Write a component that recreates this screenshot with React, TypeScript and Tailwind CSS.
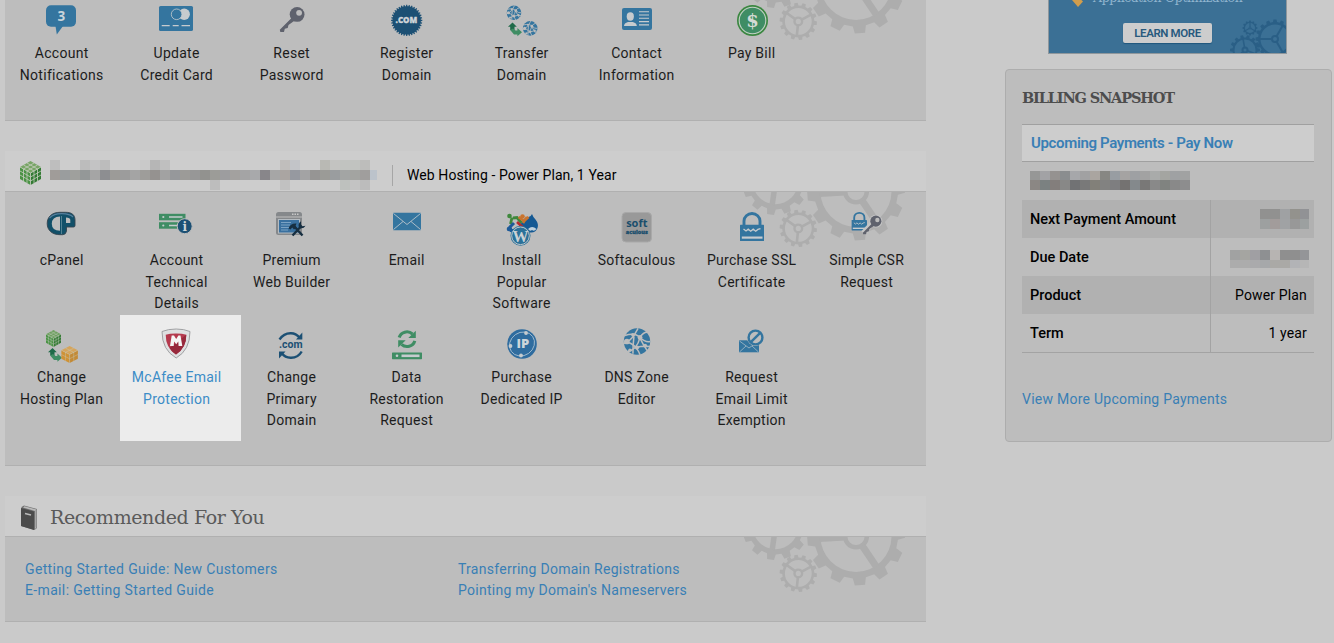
import React from "react";

const BLUE = "#34759f";
const NAVY = "#1c5074";
const GREEN = "#3f8d64";
const LIGHT = "#c6cbce";

function gearPath(cx: number, cy: number, teeth: number, rOut: number, rRim: number, rIn: number, phase: number) {
  const step = (Math.PI * 2) / teeth;
  const pt = (r: number, a: number) => `${(cx + r * Math.cos(a)).toFixed(2)} ${(cy + r * Math.sin(a)).toFixed(2)}`;
  let d = "";
  for (let i = 0; i < teeth; i++) {
    const a = phase + i * step;
    d += `${i ? "L" : "M"}${pt(rRim, a - step * 0.3)}L${pt(rOut, a - step * 0.2)}L${pt(rOut, a + step * 0.2)}L${pt(rRim, a + step * 0.3)}`;
  }
  d += `ZM${cx - rIn} ${cy}a${rIn} ${rIn} 0 1 0 ${rIn * 2} 0a${rIn} ${rIn} 0 1 0 ${-rIn * 2} 0Z`;
  return d;
}

function Gear(p: {
  cx: number; cy: number; teeth: number; out: number; rim: number; inner: number;
  hub: number; hubWidth: number; spokes: number[]; spokeWidth: number; phase: number; color: string;
}) {
  return (
    <g stroke={p.color} fill="none">
      <path d={gearPath(p.cx, p.cy, p.teeth, p.out, p.rim, p.inner, p.phase)} fill={p.color} fillRule="evenodd" stroke="none" />
      <circle cx={p.cx} cy={p.cy} r={p.hub} strokeWidth={p.hubWidth} />
      {p.spokes.map((deg) => {
        const a = (deg * Math.PI) / 180;
        return (
          <line
            key={deg}
            x1={p.cx + p.hub * Math.cos(a)}
            y1={p.cy + p.hub * Math.sin(a)}
            x2={p.cx + (p.inner + 1) * Math.cos(a)}
            y2={p.cy + (p.inner + 1) * Math.sin(a)}
            strokeWidth={p.spokeWidth}
          />
        );
      })}
    </g>
  );
}

function GearBackdrop({ className }: { className: string }) {
  return (
    <svg className={className} width="186" height="56" viewBox="740 0 186 56">
      <Gear cx={775.5} cy={-10.5} teeth={12} out={33.5} rim={28} inner={22.7} hub={7} hubWidth={4} spokes={[98, 218, 338]} spokeWidth={5.5} phase={1.72} color="#adadad" />
      <Gear cx={856} cy={-0.5} teeth={12} out={49} rim={42} inner={35.5} hub={10.8} hubWidth={4.5} spokes={[177, 56, 296]} spokeWidth={7} phase={1.49} color="#adadad" />
      <Gear cx={798.3} cy={36.4} teeth={14} out={18.7} rim={16} inner={13.4} hub={3.8} hubWidth={2.4} spokes={[96, 216, 332]} spokeWidth={2.6} phase={0.1} color="#adadad" />
    </svg>
  );
}

function Key({ color = "#5f626d" }: { color?: string }) {
  return (
    <g>
      <path d="M1 15 L-11.5 27.5 L-11 29.7 L-7.3 29.7 L-6.5 26.5 L-3.6 25.8 L-2.8 22.8 L4.5 17.6 Z" fill={color} />
      <circle cx="5.8" cy="12.2" r="7.4" fill={color} />
      <circle cx="7.8" cy="10.6" r="2.9" fill="#bdbdbd" />
    </g>
  );
}

function Globe({ cx, cy, r }: { cx: number; cy: number; r: number }) {
  const k = r / 13;
  return (
    <g transform={`translate(${cx} ${cy}) scale(${k})`}>
      <circle r="13" fill={BLUE} />
      <g fill="none" stroke="#bdbdbd" strokeWidth="1.5">
        <path d="M-12 -6 Q-2 -9 3 -4 T13 0" />
        <path d="M-13 2 Q-6 -1 -3 -6 T1 -13" />
        <path d="M-9 10 Q0 8 3 -4 Q6 -9 10 -9" />
        <path d="M-13 0 Q-5 1 -1 6 Q2 10 3 13" />
        <path d="M-3 -5 Q-4 3 -4 12" />
        <path d="M3 -3 Q6 3 10 9 M-1 6 Q6 4 13 5" />
      </g>
      <g fill="#bdbdbd">
        <circle cx="3" cy="-4" r="2.4" />
        <circle cx="-4" cy="-6.5" r="1.8" />
        <circle cx="-10" cy="0" r="2.8" />
        <circle cx="0" cy="6" r="2.1" />
        <circle cx="8" cy="4" r="1.9" />
        <circle cx="-7" cy="8.5" r="1.7" />
      </g>
    </g>
  );
}

function SwapArrows({ y }: { y: number }) {
  return (
    <g transform={`translate(0 ${y})`}>
      <path d="M-8.5 0 L-13 4.2 L-10.8 4.2 L-10.8 7.5 L-6.5 8.5 L-6.5 4.2 L-4.2 4.2 Z" fill="#1f6a49" />
      <path d="M-8 6 L-5.5 8 L-3.6 8 L-3.6 5.6 L1 9.8 L-3.6 13.8 L-3.6 12 L-7 12 L-10.8 7.5 Z" fill={GREEN} />
    </g>
  );
}

function Cube({ cx, top, w, h, color, shade, cap, cells, line = 0.6 }: {
  cx: number; top: number; w: number; h: number; color: string; shade: string; cap: string; cells: number; line?: number;
}) {
  const x0 = cx - w / 2;
  const x1 = cx + w / 2;
  const q = h / 4;
  const b = top + h;
  const hw = w / 2;
  const side = h - 2 * q;
  const lines: string[] = [];
  for (let i = 1; i < cells; i++) {
    const t = i / cells;
    if (cells > 2 || i === 1) lines.push(`M${x0} ${top + q + side * t}L${cx} ${top + 2 * q + side * t}L${x1} ${top + q + side * t}`);
    lines.push(`M${x1 - hw * t} ${top + q - q * t}L${cx - hw * t} ${top + 2 * q - q * t}V${b - q * t}`);
    lines.push(`M${x0 + hw * t} ${top + q - q * t}L${cx + hw * t} ${top + 2 * q - q * t}V${b - q * t}`);
  }
  return (
    <g>
      <path d={`M${x0} ${top + q}L${cx} ${top + 2 * q}V${b}L${x0} ${b - q}Z`} fill={color} />
      <path d={`M${x1} ${top + q}L${cx} ${top + 2 * q}V${b}L${x1} ${b - q}Z`} fill={shade} />
      <path d={`M${cx} ${top}L${x1} ${top + q}L${cx} ${top + 2 * q}L${x0} ${top + q}Z`} fill={cap} />
      <path d={`M${x0} ${top + q}L${cx} ${top + 2 * q}L${x1} ${top + q}M${cx} ${top + 2 * q}V${b}${lines.join("")}`} fill="none" stroke="#c6cdbf" strokeWidth={line} />
    </g>
  );
}

function Lock({ transform }: { transform?: string }) {
  return (
    <g transform={transform}>
      <path d="M-7.5 16V12a8 7.500 0 0 1 16 0v4" fill="none" stroke={BLUE} strokeWidth="2.9" />
      <rect x="-11.5" y="15.8" width="24" height="16.2" rx="0.6" fill={BLUE} />
      <path d="M-8 20l2.500 2 2.200-1.800 2.500 2 2.500-2 2.500 2 2.200-1.800 2.600-0.800" fill="none" stroke={LIGHT} strokeWidth="1.3" />
      <path d="M-9.700 28.600H11" stroke={LIGHT} strokeWidth="2.2" />
    </g>
  );
}

const icons: Record<string, React.ReactNode> = {
  bubble: (
    <g>
      <rect x="-15" y="3.2" width="30" height="21.6" rx="5" fill={BLUE} />
      <path d="M-5.5 24L-4.2 32.5L2 24Z" fill={BLUE} />
      <text x="0.3" y="18.8" textAnchor="middle" className="font-['Open_Sans'] text-[13.5px] font-bold" fill="#c8d3da">3</text>
    </g>
  ),
  card: (
    <g>
      <rect x="-17" y="4" width="34" height="25" rx="1.6" fill={BLUE} />
      <circle cx="8.2" cy="12.3" r="5.7" fill={LIGHT} />
      <circle cx="0.6" cy="12.3" r="5.3" fill={BLUE} stroke={LIGHT} strokeWidth="0.8" />
      <path d="M-14.3 23.6h8M-3.3 23.6h6M5.5 23.6h8.5" stroke={LIGHT} strokeWidth="1.2" />
    </g>
  ),
  key: <g transform="translate(0.3 0.2)"><Key /></g>,
  com: (
    <g>
      <path d={gearPath(0.7, 18.4, 36, 15.6, 14.2, 0.01, 0)} fill={NAVY} />
      <text x="0.4" y="21.2" textAnchor="middle" className="font-['Open_Sans'] text-[8px] font-extrabold" fill="#d0d5d8" stroke="#d0d5d8" strokeWidth="0.3">.COM</text>
    </g>
  ),
  transfer: (
    <g>
      <Globe cx={-7} cy={10.8} r={7.3} />
      <Globe cx={9.2} cy={26.4} r={7.3} />
      <SwapArrows y={20.5} />
    </g>
  ),
  contact: (
    <g>
      <rect x="-14" y="6" width="30" height="22" rx="2" fill={BLUE} />
      <ellipse cx="-5.7" cy="14.5" rx="3.6" ry="4.2" fill={LIGHT} />
      <path d="M-12 24q0-3 4-4h4.800q4 1 4 4Z" fill={LIGHT} />
      <path d="M3 9.700h10M3 13h10M3 16.300h10M3 19.600h10M3 22.900h10" stroke={LIGHT} strokeWidth="1.1" />
    </g>
  ),
  bill: (
    <g>
      <circle cx="1.500" cy="18.500" r="15.500" fill="#3b8741" />
      <circle cx="1.500" cy="18.500" r="13.300" fill={GREEN} stroke="#c4d2c6" strokeWidth="1.100" />
      <text x="1.500" y="25.200" textAnchor="middle" className="font-['DejaVu_Serif'] text-[18px] font-bold" fill="#d3dad5">$</text>
    </g>
  ),
  cpanel: (
    <g>
      <path d="M-1 3.300H4.500C11 3.300 14 6 14 11V16.500Q14 18 12.500 18H5.500V22Q5 25.700 1.500 25.700H-1C-8.500 25.700 -13.800 21.500 -13.800 14.500S-8.500 3.300 -1 3.300Z" fill="#125069" stroke="#37444f" strokeWidth="0.9" />
      <path d="M-1 7.500V21.800Q-9.200 21.500 -9.200 14.700T-1 7.500Z" fill="#bdbdbd" />
      <path d="M5 8.500Q9.300 8.500 9.300 11V14H5Z" fill="#bdbdbd" />
      <path d="M0.500 7v18" stroke="#7ea2ae" strokeWidth="0.600" />
      <path d="M-11.500 9Q-7 4.500 1 4.700T12 8" fill="none" stroke="#577f9d" strokeWidth="1.200" />
    </g>
  ),
  server: (
    <g>
      <rect x="-17" y="4.800" width="26.500" height="6.500" fill={GREEN} />
      <rect x="-17" y="13.200" width="22" height="6.500" fill={GREEN} />
      <circle cx="-12.700" cy="8" r="1.100" fill={LIGHT} />
      <circle cx="-12.700" cy="16.500" r="1.100" fill={LIGHT} />
      <path d="M-7 8h13.500M-7 16.500h10" stroke={LIGHT} strokeWidth="1.400" />
      <circle cx="8.700" cy="17.200" r="7.500" fill={NAVY} stroke="#bdbdbd" strokeWidth="1" />
      <text x="8.700" y="21.500" textAnchor="middle" className="font-['DejaVu_Serif'] text-[12px] font-bold" fill="#d0d5d8">i</text>
    </g>
  ),
  builder: (
    <g>
      <rect x="-15" y="3" width="26" height="23" rx="2.500" fill="#85888b" />
      <path d="M-15 8h26" stroke="#b7b7b7" strokeWidth="1.200" />
      <path d="M1 5.200h7" stroke="#c8c8c8" strokeWidth="1.400" strokeDasharray="1.500 1" />
      <rect x="-12.500" y="10.500" width="21" height="13.500" fill="#39709f" stroke="#b4bbc1" strokeWidth="1" />
      <path d="M-10 13.500h10M-10 16h9M-10 18.500h8M-10 21h7" stroke="#82a8c7" strokeWidth="0.900" />
      <path d="M3 17l8.500 9.500M9.500 18L1.500 26.500" stroke="#172f41" strokeWidth="2.400" />
      <path d="M-2.500 19.500Q-0.500 14 5.500 14.500L4.500 17L5.500 18.500L3 20.500L1.200 18.500L-0.500 20.500Z" fill="#172f41" />
      <path d="M10 12.200Q6.500 14.500 8 18.500Q12 20.800 14.500 16.800L11.500 17.300L10 15.500Z" fill="#172f41" />
    </g>
  ),
  email: (
    <g>
      <rect x="-13" y="3.700" width="28" height="17.500" rx="0.600" fill={BLUE} />
      <path d="M-12.500 4.500L1 15.500L14.500 4.500M-12.500 20.500L-3 12.500M14.500 20.500L5 12.500" fill="none" stroke="#b8c4cc" strokeWidth="0.9" />
    </g>
  ),
  install: (
    <g>
      <path d="M2 12Q3 8.500 7.500 8Q10 7.500 11 5Q12 8 14.500 10.500Q18 15 16.500 19Q14 25 7 23L-2 17Z" fill="#155993" />
      <path d="M7 20q4-4 8.500 0-2.500 3-4.500 1-2 2-4-1Z" fill="#bfd0dc" />
      <path d="M-8 9L-4 8.500L0.500 14M-9 8.500L-10.500 15" fill="none" stroke="#3e883c" strokeWidth="2.800" />
      <path d="M-2.500 8L3 12L7.500 8M6 8L2 14" fill="none" stroke="#c9732d" strokeWidth="2.600" />
      <path d="M-4 13l6 5.500" stroke="#b72b2e" strokeWidth="2.600" />
      <path d="M-7 14L-11 18L-10 21.500H-7" fill="none" stroke="#1d5a99" strokeWidth="3" />
      <circle cx="-11.500" cy="7" r="2.300" fill="#3e883c" />
      <circle cx="1.500" cy="7.500" r="2.300" fill="#c9732d" />
      <circle cx="-12" cy="20" r="2.300" fill="#1d5a99" />
      <circle cx="-0.500" cy="26.800" r="10" fill="#2b7199" />
      <circle cx="-0.500" cy="26.800" r="8.800" fill="none" stroke="#c0c7cb" strokeWidth="1" />
      <text x="-0.500" y="32.500" textAnchor="middle" className="font-['Liberation_Serif'] text-[16px] font-bold" fill="#cad1d5">W</text>
    </g>
  ),
  soft: (
    <g>
      <rect x="-14" y="3.500" width="29.500" height="29.500" rx="4" fill="#999" stroke="#a9a9a9" />
      <text x="0.800" y="17.500" textAnchor="middle" className="font-['Open_Sans'] text-[11px] font-bold" fill="#1a4e6c">soft</text>
      <text x="0.800" y="25" textAnchor="middle" textLength="22" className="font-['Open_Sans'] text-[5.5px] font-extrabold" fill="#1a4e6c" stroke="#1a4e6c" strokeWidth="0.300">aculous</text>
    </g>
  ),
  ssl: <Lock transform="translate(0.500 0)" />,
  csr: (
    <g>
      <Lock transform="translate(-7 1) scale(0.640)" />
      <g transform="translate(5.500 3) scale(0.750)">
        <path d="M1 15L-11 28" stroke="#c6c6c6" strokeWidth="7" />
        <circle cx="5.800" cy="12.200" r="8.600" fill="#c6c6c6" />
        <Key />
      </g>
    </g>
  ),
  plan: (
    <g>
      <Cube cx={-7.500} top={4} w={15} h={17} color="#4a9244" shade="#357a35" cap="#6fa061" cells={3} line={0.4} />
      <SwapArrows y={22} />
      <Cube cx={8.600} top={20} w={16.500} h={17} color="#cf9235" shade="#c38a36" cap="#d5a45b" cells={2} line={0.4} />
    </g>
  ),
  mcafee: (
    <g>
      <path d="M0.200 3Q8 3 14 5.500Q14 24 0.200 32Q-14 24 -14 5.500Q-8 3 0.200 3Z" fill="#dfe0e1" stroke="#97999b" strokeWidth="0.9" />
      <path d="M0 7.500Q6.500 7.500 10.300 8.700Q10.500 21.500 0 28.500Q-10.500 21.500 -10.300 8.700Q-6.500 7.500 0 7.500Z" fill="#b53a4e" />
      <path d="M10.300 8.700Q10.500 21.500 0 28.500Q-4 26 -6.500 22Z" fill="#97293c" />
      <path d="M-6 20L-4.300 9.500H-2L0.200 13L2.400 9.500H4.500L6.300 20H2.600L2.300 15.500L0.200 18.300L-1.900 15.500L-2.300 20Z" fill="#f5f5f5" />
    </g>
  ),
  change: (
    <g>
      <path d="M-11.500 13.500Q-7 7 0 7.300Q5 7.500 8.500 11.500" fill="none" stroke={NAVY} strokeWidth="2.400" />
      <path d="M5 13.500H11.300V6.500Z" fill={NAVY} />
      <path d="M10.700 25.500Q7 32 -0.500 31.700Q-6 31.500 -9 27.500" fill="none" stroke={NAVY} strokeWidth="2.400" />
      <path d="M-5.500 25.500H-12V32.500Z" fill={NAVY} />
      <text x="-0.300" y="22.300" textAnchor="middle" className="font-['Roboto'] text-[10.5px] font-bold" fill={NAVY}>.com</text>
    </g>
  ),
  restore: (
    <g fill="none" stroke={GREEN} strokeWidth="3.100">
      <path d="M-6.800 11.500A8 7.600 0 0 1 6.500 8" />
      <path d="M2.300 12H9.800V4.700Z" fill={GREEN} stroke="none" />
      <path d="M8.800 14.800A8 7.600 0 0 1 -4.500 18.300" />
      <path d="M-0.300 14.300H-7.800V21.600Z" fill={GREEN} stroke="none" />
      <rect x="-14" y="26.500" width="30" height="6.700" rx="0.600" fill={GREEN} stroke="none" />
      <circle cx="-9" cy="29.800" r="1.300" fill={LIGHT} stroke="none" />
      <path d="M-4.500 29.800h18" stroke={LIGHT} strokeWidth="2.600" />
    </g>
  ),
  ip: (
    <g>
      <circle cx="1" cy="18" r="14.800" fill="#2f6c9f" />
      <ellipse cx="1" cy="18" rx="13" ry="11.500" fill="none" stroke="#9fb9cd" strokeWidth="0.900" transform="rotate(-35 1 18)" />
      <circle cx="5" cy="7" r="1.900" fill={LIGHT} />
      <circle cx="-10.500" cy="20" r="1.900" fill={LIGHT} />
      <circle cx="0" cy="29.500" r="1.900" fill={LIGHT} />
      <text x="1.800" y="22.300" textAnchor="middle" className="font-['Open_Sans'] text-[13px] font-extrabold" fill="#cdd5da">IP</text>
    </g>
  ),
  dns: <Globe cx={1} cy={15.500} r={13.200} />,
  limit: (
    <g>
      <rect x="-12" y="14.300" width="20" height="12" fill={BLUE} />
      <path d="M-11.500 15L-2 22L7.500 15M-11.500 26L-5 20M7.500 26L1 20" fill="none" stroke="#b8c4cc" strokeWidth="0.700" />
      <circle cx="4.500" cy="11.500" r="8.500" fill="#bdbdbd" />
      <circle cx="4.500" cy="11.500" r="6.900" fill="none" stroke={BLUE} strokeWidth="2.400" />
      <path d="M-0.200 16.200L9.200 6.800" stroke={BLUE} strokeWidth="2.400" />
    </g>
  ),
};

type Item = { icon: string; lines: string[]; active?: boolean };

const accountItems: Item[] = [
  { icon: "bubble", lines: ["Account", "Notifications"] },
  { icon: "card", lines: ["Update", "Credit Card"] },
  { icon: "key", lines: ["Reset", "Password"] },
  { icon: "com", lines: ["Register", "Domain"] },
  { icon: "transfer", lines: ["Transfer", "Domain"] },
  { icon: "contact", lines: ["Contact", "Information"] },
  { icon: "bill", lines: ["Pay Bill"] },
];

const hostingItems: Item[] = [
  { icon: "cpanel", lines: ["cPanel"] },
  { icon: "server", lines: ["Account", "Technical", "Details"] },
  { icon: "builder", lines: ["Premium", "Web Builder"] },
  { icon: "email", lines: ["Email"] },
  { icon: "install", lines: ["Install", "Popular", "Software"] },
  { icon: "soft", lines: ["Softaculous"] },
  { icon: "ssl", lines: ["Purchase SSL", "Certificate"] },
  { icon: "csr", lines: ["Simple CSR", "Request"] },
  { icon: "plan", lines: ["Change", "Hosting Plan"] },
  { icon: "mcafee", lines: ["McAfee Email", "Protection"], active: true },
  { icon: "change", lines: ["Change", "Primary", "Domain"] },
  { icon: "restore", lines: ["Data", "Restoration", "Request"] },
  { icon: "ip", lines: ["Purchase", "Dedicated IP"] },
  { icon: "dns", lines: ["DNS Zone", "Editor"] },
  { icon: "limit", lines: ["Request", "Email Limit", "Exemption"] },
];

function IconGrid({ items }: { items: Item[] }) {
  return (
    <div className="-ml-[1.5px] grid w-[920px] auto-rows-[117px] grid-cols-8">
      {items.map((item) => (
        <a key={item.icon} className="relative flex flex-col items-center text-center">
          {item.active && <span className="absolute -top-[11px] left-[1.5px] h-[126px] w-[121px] bg-[#ececec]" />}
          <svg className="relative h-[41px] w-[60px] shrink-0 overflow-visible" viewBox="-30 0 60 41">{icons[item.icon]}</svg>
          <span className={`relative pl-[1.3px] text-[14px] leading-[21.6px] tracking-[0.27px] ${item.active ? "text-[#3c8cc7]" : "text-[#1c1c1c]"}`}>
            {item.lines.map((line) => (
              <span key={line} className="block whitespace-nowrap">{line}</span>
            ))}
          </span>
        </a>
      ))}
    </div>
  );
}

type Block = [number, number, number, number, string];

function Mosaic({ blocks, width, height, className }: { blocks: Block[]; width: number; height: number; className?: string }) {
  return (
    <svg className={className} width={width} height={height} shapeRendering="crispEdges">
      {blocks.map(([x, y, w, h, fill]) => (
        <rect key={`${x}-${y}`} x={x} y={y} width={w} height={h} fill={fill} />
      ))}
    </svg>
  );
}

const row = (colors: string, y: number, h: number): Block[] =>
  colors.split(" ").map((c, i) => [i * 10, y, 10, h, `#${c}`] as Block);

const domainBlocks: Block[] = [
  ...row("a09c99 9a9d9e 9fa09d 949898 a5a5a5 8d8e91 9c9b98 9c9c9c a4a4a4 9e9d9a 959290 a2a2a2 96989b 9c9b98 979797 92928f 9c9c98 9d9d9f a3a19f a4a4a5 a8a9ab 88868a a6a6a6 aaa5a2 9699a0 a3a3a4 969594 9b9b97 9a9d9f a3a5a4 a3a4a1 a09e9d", 10, 10),
  [320, 10, 7, 10, "#bcc3cb"],
  [0, 0, 10, 10, "#bebebe"], [30, 0, 10, 10, "#bcbcbc"], [40, 0, 10, 10, "#c3c3c4"], [50, 0, 10, 10, "#bcbcbc"],
  [90, 0, 10, 10, "#c9c9c9"], [100, 0, 10, 10, "#b6b6b6"], [110, 0, 10, 10, "#bfbfbf"],
  [230, 0, 10, 10, "#c0bebc"], [240, 0, 10, 10, "#c2c4c8"], [270, 0, 10, 10, "#b9b9b4"], [280, 0, 10, 10, "#c3c3c1"],
  [290, 0, 20, 10, "#c1c3c0"], [310, 0, 10, 10, "#bdbdbb"],
  [160, 20, 10, 10, "#bdbdbd"], [230, 20, 10, 10, "#c1c1c1"], [290, 20, 10, 10, "#bec1be"], [300, 20, 10, 10, "#c3c3c3"], [310, 20, 10, 10, "#bcbcbc"],
];

const payerBlocks: Block[] = [
  ...row("969796 a2a2a5 959290 8a8d8f a6a7aa a1a1a2 aaa5a0 878783 989da2 a5a3a2 9ea0a3 a2a2a2 a9abaa a4a5a1 9fa1a3 a1a2a2", 0, 9),
  ...row("8b8784 7b8181 837e7c 888887 717274 797979 828079 828281 7e7e80 747271 84898c 797877 898989 808380 898989 8d8d8e", 9, 10),
];

const amountBlocks: Block[] = [
  [0, 0, 20, 10, "#919190"], [20, 0, 10, 10, "#9fa1a3"], [30, 0, 10, 10, "#93928d"], [40, 0, 9, 10, "#919295"],
  [0, 10, 10, 10, "#9da0a0"], [10, 10, 10, 10, "#a29c9b"], [20, 10, 10, 10, "#a0a2a4"], [30, 10, 10, 10, "#989898"], [40, 10, 9, 10, "#9ca0a0"],
];

const dueBlocks: Block[] = [
  [0, 0, 10, 10, "#a1a2a2"], [10, 0, 10, 10, "#a5a5a1"], [20, 0, 10, 10, "#a09fa3"], [30, 0, 10, 10, "#8e9092"], [40, 0, 10, 10, "#b7b4b2"], [50, 0, 20, 10, "#8f8f8f"], [70, 0, 9, 10, "#949598"],
  [0, 10, 20, 8, "#acacac"], [20, 10, 10, 8, "#aaaaac"], [30, 10, 10, 8, "#a6a8aa"], [40, 10, 20, 8, "#aaa9a6"], [60, 10, 10, 8, "#b2b3b6"], [70, 10, 9, 8, "#b6b6b6"],
];

function BookIcon() {
  return (
    <svg className="ml-4 mt-1 h-[26px] w-[18px]" viewBox="0 0 18 26">
      <path d="M0.500 2L3 0.500L16 4V23L13.500 25L0 21Z" fill="#707070" />
      <path d="M2 2.500L3.500 1.300L15.500 4.500V22.500L14 24V6Z" fill="#bababa" />
      <path d="M0 3L13 6.500V25L0 21Z" fill="#4b4b4b" />
      <path d="M4 8.500L10 10" stroke="#bbb" strokeWidth="1.300" />
      <path d="M15 5V22.500" stroke="#808080" strokeWidth="0.700" />
    </svg>
  );
}

function PromoBanner() {
  return (
    <div className="relative ml-[43px] h-[54px] w-[239px] overflow-hidden border border-t-0 border-[#8f979c] bg-[#3b7095]">
      <svg className="absolute left-[23px] top-0 h-[7px] w-3" viewBox="0 0 12 7">
        <path d="M0 0L6 7L11 1.500L9.500 0Z" fill="#d19d4c" />
      </svg>
      <div className="absolute -top-[10px] left-[44px] whitespace-nowrap font-['DejaVu_Serif',serif] text-[12.5px] leading-4 tracking-[-0.35px] text-[#91b5cf]">Application Optimization</div>
      <div className="mx-auto mt-[23px] flex h-5 w-[89px] items-center justify-center rounded-[2px] bg-[#cdcdcd] font-['Roboto',sans-serif] text-[11.5px] font-semibold leading-5 tracking-[-0.4px] text-[#285a7d] shadow-[0_1px_1px_#21577d]">LEARN MORE</div>
      <svg className="absolute bottom-0 right-0" width="56" height="34" viewBox="0 0 56 34">
        <Gear cx={45} cy={20} teeth={16} out={19.500} rim={17} inner={14.500} hub={3} hubWidth={2} spokes={[60, 180, 300]} spokeWidth={2} phase={0} color="#2a5f86" />
        <Gear cx={20} cy={9} teeth={12} out={7.500} rim={6.300} inner={5} hub={1} hubWidth={1} spokes={[30, 150, 270]} spokeWidth={1.200} phase={0} color="#2a5f86" />
        <Gear cx={15} cy={31} teeth={14} out={15} rim={12.500} inner={10.500} hub={2.500} hubWidth={2} spokes={[20, 140, 260]} spokeWidth={1.600} phase={0} color="#2a5f86" />
      </svg>
    </div>
  );
}

export default function App() {
  const label = "flex-1 pl-2 pt-[1px] text-[14.5px] font-medium text-black";
  const value = "flex h-full w-[104px] items-center justify-end border-l border-[#a3a3a3] text-[14px] tracking-[0.15px] text-black";
  return (
    <div className="flex h-[643px] w-[1334px] overflow-hidden bg-[#cacaca] font-['Roboto','Liberation_Sans',sans-serif]">
      <main className="ml-[5px] w-[921px] shrink-0">
        <section className="relative h-[121px] overflow-hidden border-b border-[#b0b0b0] bg-[#bdbdbd] pt-[2px]">
          <GearBackdrop className="absolute -top-[15.500px] right-0" />
          <IconGrid items={accountItems} />
        </section>

        <section className="mt-[30px]">
          <header className="flex h-[41px] items-center border-b border-[#b0b0b0] bg-[#cdcdcd]">
            <svg className="ml-[15px] mt-1 h-6 w-[22px]" viewBox="0 0 22 24">
              <Cube cx={10.500} top={0} w={21} h={24} color="#4a9244" shade="#327a33" cap="#78a566" cells={3} line={0.8} />
            </svg>
            <Mosaic className="ml-2 mt-2" blocks={domainBlocks} width={327} height={30} />
            <div className="ml-[15px] mt-2 h-[21px] border-l border-[#a6a6a6]" />
            <div className="ml-[14px] mt-[9px] text-[14px] tracking-[0.1px] text-black">Web Hosting - Power Plan, 1 Year</div>
          </header>
          <div className="relative h-[274px] border-b border-[#b0b0b0] bg-[#bdbdbd] pt-[17px]">
            <GearBackdrop className="absolute right-0 top-0" />
            <IconGrid items={hostingItems} />
          </div>
        </section>

        <section className="mt-[30px]">
          <header className="flex h-[41px] items-center border-b border-[#b0b0b0] bg-[#cdcdcd]">
            <BookIcon />
            <h2 className="ml-[11px] mt-[3px] font-['DejaVu_Serif',serif] text-[19px] tracking-[-0.4px] text-[#5a5a5a]">Recommended For You</h2>
          </header>
          <div className="relative h-[85px] border-b border-[#b0b0b0] bg-[#bdbdbd] pl-5 pt-[22px]">
            <GearBackdrop className="absolute right-0 top-0" />
            <div className="relative flex text-[14px] leading-[21px] text-[#397fb5]">
              <div className="w-[433px] tracking-[0.35px]">
                <a className="block">Getting Started Guide: New Customers</a>
                <a className="block">E-mail: Getting Started Guide</a>
              </div>
              <div className="tracking-[0.27px]">
                <a className="block">Transferring Domain Registrations</a>
                <a className="block">Pointing my Domain's Nameservers</a>
              </div>
            </div>
          </div>
        </section>
      </main>

      <aside className="ml-[79px] w-[327px] shrink-0">
        <PromoBanner />
        <section className="mt-[15px] h-[373px] rounded border border-[#adadad] bg-[#bdbdbd] px-4 pt-[15px]">
          <h3 className="h-[39px] font-['DejaVu_Serif',serif] text-[14.5px] font-bold leading-[26px] tracking-[-1.15px] text-[#4d4d4d]">BILLING SNAPSHOT</h3>
          <div className="flex h-[38px] w-[292px] items-center border-y border-[#a0a0a0] bg-[#cdcdcd] pl-[9px] text-[15px] font-semibold tracking-[-0.35px] text-[#397fb5]">Upcoming Payments - Pay Now</div>
          <div className="h-[38px] pl-2 pt-[9px]">
            <Mosaic blocks={payerBlocks} width={160} height={19} />
          </div>
          <div className="w-[292px] border-b border-[#a3a3a3]">
            <div className="flex h-[38px] items-center bg-[#b1b1b1]">
              <div className={label}>Next Payment Amount</div>
              <div className={`${value} pr-[5px]`}><Mosaic blocks={amountBlocks} width={49} height={20} /></div>
            </div>
            <div className="flex h-[38px] items-center">
              <div className={label}>Due Date</div>
              <div className={`${value} pr-[5px] pt-[3px]`}><Mosaic blocks={dueBlocks} width={79} height={18} /></div>
            </div>
            <div className="flex h-[38px] items-center bg-[#b1b1b1]">
              <div className={label}>Product</div>
              <div className={`${value} pr-[7px]`}>Power Plan</div>
            </div>
            <div className="flex h-[38px] items-center">
              <div className={label}>Term</div>
              <div className={`${value} pr-[7px] tracking-[-0.1px]`}>1 year</div>
            </div>
          </div>
          <a className="mt-[36px] block text-[14px] leading-[21px] tracking-[0.250px] text-[#397fb5]">View More Upcoming Payments</a>
        </section>
      </aside>
    </div>
  );
}
